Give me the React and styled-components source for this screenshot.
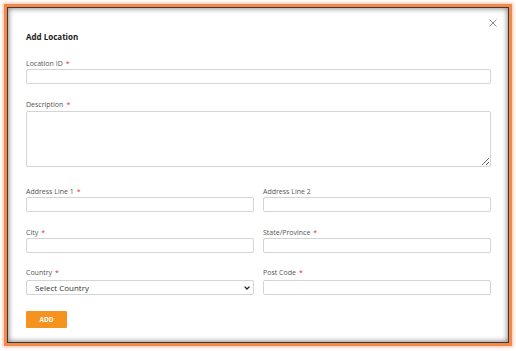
import React from "react";
import styled, { createGlobalStyle } from "styled-components";

const GlobalStyle = createGlobalStyle`
  html, body {
    margin: 0;
    padding: 0;
    background: #ffffff;
  }
  body {
    font-family: "Open Sans", "Liberation Sans", sans-serif;
  }
`;

const Page = styled.div`
  width: 516px;
  height: 351px;
  padding: 4px;
  box-sizing: border-box;
`;

const Frame = styled.div`
  width: 508px;
  height: 342px;
  box-sizing: border-box;
  border: 3px solid #f4874a;
  box-shadow: 0 0 3px 1px rgba(244, 135, 74, 0.55);
  display: flex;
`;

const Modal = styled.div`
  position: relative;
  flex: 1;
  border: 1px solid #3a3a3a;
  box-shadow: inset 0 0 5px 1px rgba(0, 0, 0, 0.45);
  background: #fff;
  padding: 24px 17px 0 18px;
`;

const Close = styled.button`
  position: absolute;
  top: 10px;
  right: 10px;
  width: 10px;
  height: 10px;
  padding: 0;
  border: none;
  background: none;
  display: flex;
  align-items: center;
  justify-content: center;
`;

const Title = styled.h2`
  margin: 0 0 17px 0;
  font-size: 8px;
  line-height: 10px;
  font-weight: 700;
  color: #222;
`;

const Field = styled.div`
  display: flex;
  flex-direction: column;
  margin-bottom: ${({ $mb }) => ($mb != null ? $mb : 16)}px;
`;

const Row = styled.div`
  display: grid;
  grid-template-columns: 1fr 1fr;
  column-gap: 9px;
  margin-bottom: ${({ $mb }) => ($mb != null ? $mb : 16)}px;
`;

const Label = styled.label`
  font-size: 7px;
  line-height: 10px;
  height: 10px;
  color: #555;
`;

const Req = styled.span`
  color: #e0313b;
  margin-left: 3px;
`;

const Input = styled.input`
  display: block;
  box-sizing: border-box;
  width: 100%;
  height: 15px;
  margin: ${({ $mt }) => $mt || 0}px 0 0 0;
  border: 1px solid #d4d4d4;
  border-radius: 2px;
  background: #fff;
  outline: none;
`;

const TextArea = styled.textarea`
  display: block;
  box-sizing: border-box;
  width: 100%;
  height: 56px;
  margin: 1px 0 0 0;
  border: 1px solid #d4d4d4;
  border-radius: 2px;
  background: #fff;
  outline: none;
`;

const SelectWrap = styled.div`
  position: relative;
  margin-top: 2px;
`;

const Select = styled.select`
  display: block;
  box-sizing: border-box;
  width: 100%;
  height: 15px;
  appearance: none;
  border: 1px solid #d4d4d4;
  border-radius: 2px;
  background: #fff;
  padding: 0 0 0 8px;
  font-family: "Open Sans", "Liberation Sans", sans-serif;
  font-size: 8px;
  line-height: 13px;
  color: #333;
  outline: none;
`;

const Chevron = styled.svg`
  position: absolute;
  right: 4px;
  top: 6px;
  pointer-events: none;
`;

const AddButton = styled.button`
  display: block;
  width: 41px;
  height: 17px;
  border: none;
  border-radius: 1px;
  background: #f6921e;
  color: #fff;
  font-family: "Open Sans", "Liberation Sans", sans-serif;
  font-size: 6.5px;
  font-weight: 700;
  padding: 0;
`;

const App = () => {
  return (
    <>
      <GlobalStyle />
      <Page>
        <Frame>
          <Modal>
            <Close aria-label="close">
              <svg width="8" height="8" viewBox="0 0 8 8">
                <path d="M0.5 0.5 L7.5 7.5 M7.5 0.5 L0.5 7.5" stroke="#8a8a8a" strokeWidth="1" />
              </svg>
            </Close>
            <Title>Add Location</Title>

            <Field>
              <Label>
                Location ID<Req>*</Req>
              </Label>
              <Input />
            </Field>

            <Field $mb={20}>
              <Label>
                Description<Req>*</Req>
              </Label>
              <TextArea />
            </Field>

            <Row>
              <Field $mb={0}>
                <Label>
                  Address Line 1<Req>*</Req>
                </Label>
                <Input />
              </Field>
              <Field $mb={0}>
                <Label>Address Line 2</Label>
                <Input />
              </Field>
            </Row>

            <Row $mb={15}>
              <Field $mb={0}>
                <Label>
                  City<Req>*</Req>
                </Label>
                <Input />
              </Field>
              <Field $mb={0}>
                <Label>
                  State/Province<Req>*</Req>
                </Label>
                <Input />
              </Field>
            </Row>

            <Row>
              <Field $mb={0}>
                <Label>
                  Country<Req>*</Req>
                </Label>
                <SelectWrap>
                  <Select defaultValue="">
                    <option value="">Select Country</option>
                  </Select>
                  <Chevron width="6" height="4" viewBox="0 0 6 4">
                    <path d="M0.6 0.6 L3 3 L5.4 0.6" fill="none" stroke="#222" strokeWidth="1.3" />
                  </Chevron>
                </SelectWrap>
              </Field>
              <Field $mb={0}>
                <Label>
                  Post Code<Req>*</Req>
                </Label>
                <Input $mt={2} />
              </Field>
            </Row>

            <AddButton>ADD</AddButton>
          </Modal>
        </Frame>
      </Page>
    </>
  );
};

export default App;
